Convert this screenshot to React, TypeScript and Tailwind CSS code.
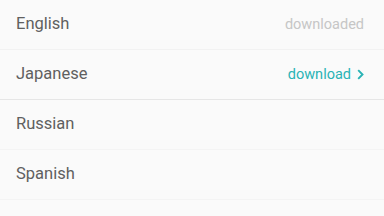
const ROWS = [
  { name: "English", status: "downloaded" as const, line: "border-[#f2f2f2]" },
  { name: "Japanese", status: "download" as const, line: "border-[#e6e6e6]" },
  { name: "Russian", status: null, line: "border-[#f4f4f4]" },
  { name: "Spanish", status: null, line: "border-[#f4f4f4]" },
];

export default function App() {
  return (
    <div
      className="w-[384px] h-[216px] bg-[#fafafa] overflow-hidden"
      style={{ fontFamily: "Roboto, 'Noto Sans', sans-serif" }}
    >
      {ROWS.map((row) => (
        <div
          key={row.name}
          className={`flex items-center justify-between h-[50px] pl-4 pr-5 border-b ${row.line}`}
        >
          <span className="text-[16.5px] text-[#606060]">{row.name}</span>
          {row.status === "downloaded" && (
            <span className="text-[14.5px] text-[#c6c6c6]">downloaded</span>
          )}
          {row.status === "download" && (
            <span className="flex items-center gap-[6px] text-[14.5px] text-[#29b3b5]">
              download
              <svg width="7" height="11" viewBox="0 0 7 11" fill="none">
                <path d="M1.2 1.2l4.3 4.3-4.3 4.3" stroke="#29b3b5" strokeWidth="1.9" />
              </svg>
            </span>
          )}
        </div>
      ))}
    </div>
  );
}
